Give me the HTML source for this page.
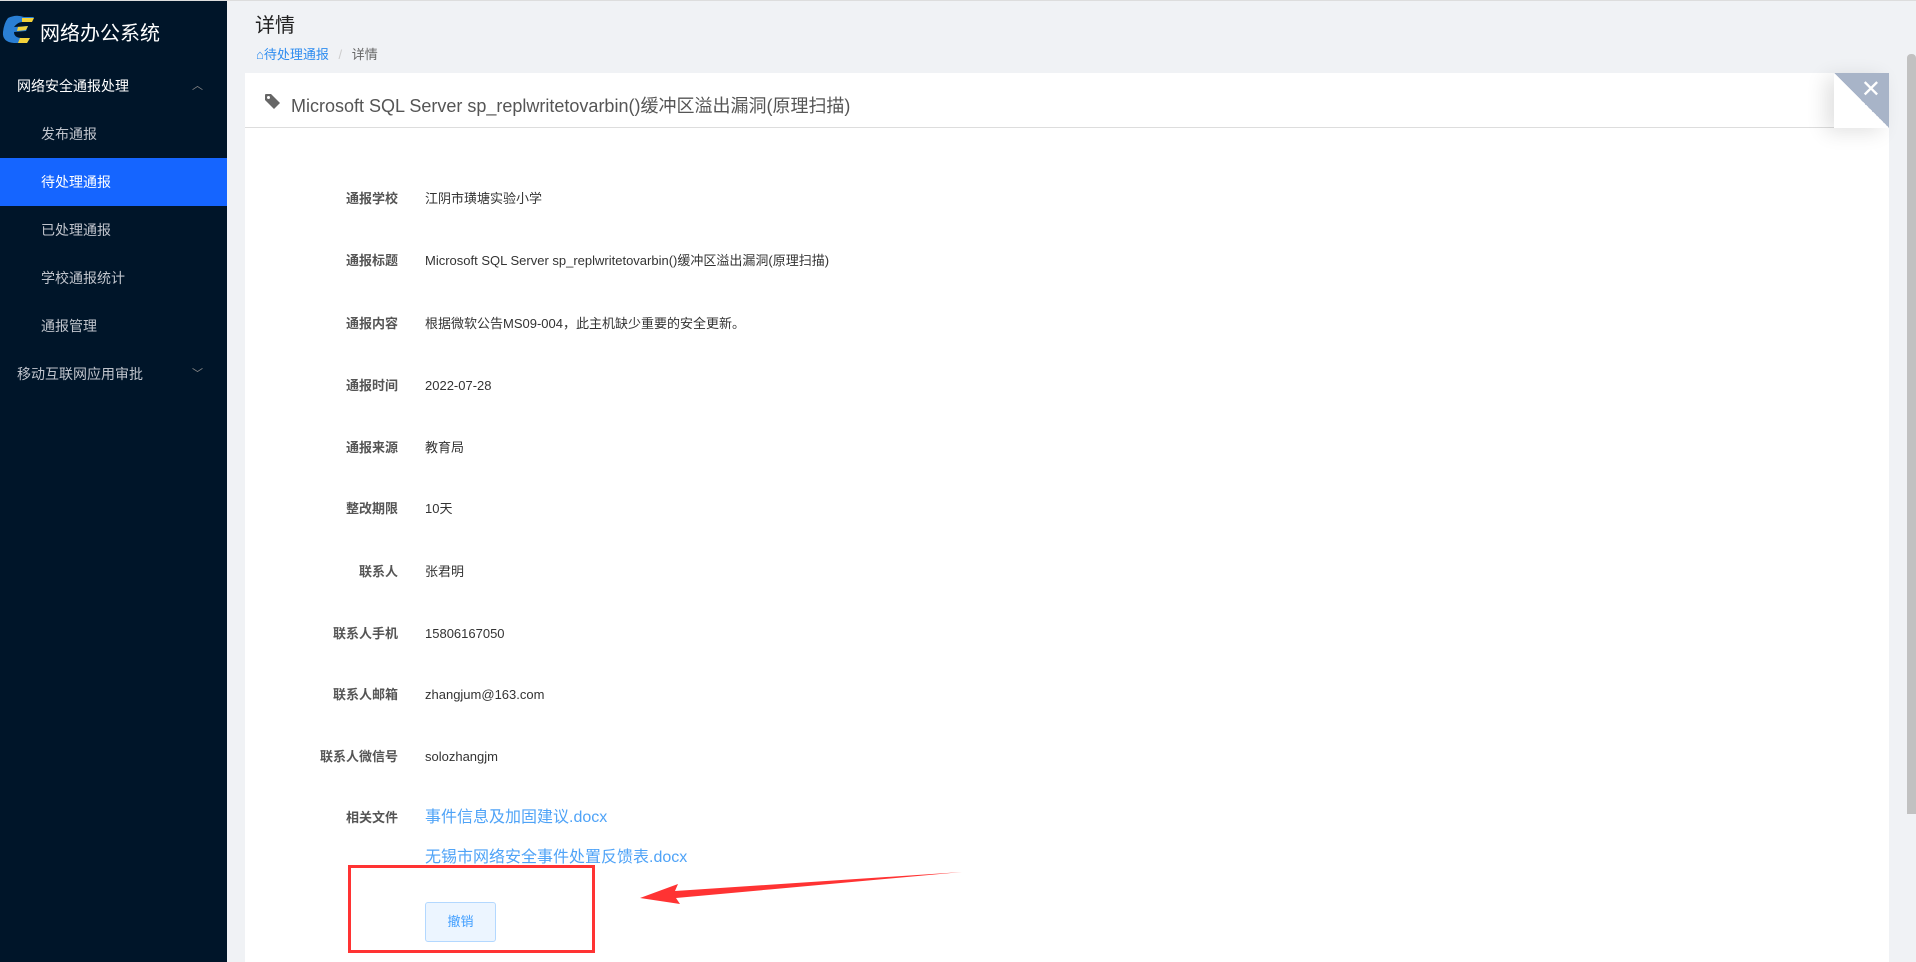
<!DOCTYPE html>
<html style="overflow:hidden;height:962px"><head><meta charset="utf-8"><style>
*{margin:0;padding:0;box-sizing:border-box}
body{width:1916px;height:962px;overflow:hidden;background:#f0f2f5;font-family:"Liberation Sans","Noto Sans CJK SC",sans-serif;position:relative}
.side{position:absolute;left:0;top:0;width:227px;height:962px;background:#001529;border-top:1px solid #ddd}
.logo{position:absolute;left:40px;top:16px;color:#fff;font-size:20px}
.mi{position:absolute;left:0;width:227px;height:48px;line-height:48px;color:#c0c4cc;font-size:14px}
.mi.sub{padding-left:41px}
.mi.grp{padding-left:17px;color:#fff}
.mi.act{background:#1565ff;color:#fff}
.chev{position:absolute;right:24px;top:0;color:#888;font-size:11px}
.topline{position:absolute;left:227px;top:0;right:0;height:1px;background:#ddd}
.h1{position:absolute;left:255px;top:9px;font-size:20px;color:#222}
.bc{position:absolute;left:256px;top:44px;font-size:13px;color:#666}
.bc a{color:#2d8cf0}
.card{position:absolute;left:245px;top:73px;width:1644px;height:889px;background:#fff}
.ch{height:55px;border-bottom:1px solid #ddd;position:relative}
.ttl{position:absolute;left:46px;top:19px;font-size:18px;color:#555}
.close{position:absolute;right:0;top:0;width:55px;height:55px;background:linear-gradient(45deg,#fff 50%,#a8b4c8 50%);box-shadow:-8px 4px 20px rgba(0,0,0,.12)}
.close span{position:absolute;right:8px;top:2px;color:#fff;font-size:24px}
.row{position:absolute;left:0;width:1000px;font-size:13px;height:20px;line-height:20px}
.lab{position:absolute;right:calc(1000px - 398px);color:#555;font-weight:bold;white-space:nowrap}
.val{position:absolute;left:425px;color:#333;white-space:nowrap}
.file{color:#4fa3f7;font-size:16px}
.btn{position:absolute;left:425px;top:902px;width:71px;height:40px;border:1px solid #b3d8ff;background:#ecf5ff;color:#409eff;font-size:13px;text-align:center;line-height:38px;border-radius:3px}
.red{position:absolute;left:348px;top:865px;width:247px;height:88px;border:3px solid #f33}
.sb{position:absolute;left:1907px;top:54px;width:9px;height:760px;background:#c1c1c1;border-radius:4px 4px 0 0}
</style></head><body>
<div class="side">
<svg style="position:absolute;left:0;top:13px" width="36" height="32" viewBox="0 0 36 32"><path d="M8 4 Q16 0 24 3 L34 3 L31 8 L22 8 Q18 8 14 13 L28 12 L26 17 L14 18 Q14 24 22 24 L30 24 L27 29 L14 29 Q2 28 3 18 Q4 9 8 4Z" fill="#2a7fd4"/><path d="M22 4 L34 4 L32 8 L22 8Z M18 13 L28 12 L26 16 L17 17Z M20 24 L30 24 L27 29 L18 29Z" fill="#f4d23a"/></svg>
<div class="logo">网络办公系统</div>
<div class="mi grp" style="top:61px">网络安全通报处理<span class="chev">︿</span></div>
<div class="mi sub" style="top:109px">发布通报</div>
<div class="mi sub act" style="top:157px">待处理通报</div>
<div class="mi sub" style="top:205px">已处理通报</div>
<div class="mi sub" style="top:253px">学校通报统计</div>
<div class="mi sub" style="top:301px">通报管理</div>
<div class="mi grp" style="top:349px;color:#c0c4cc">移动互联网应用审批<span class="chev">﹀</span></div>
</div>
<div class="topline"></div>
<div class="h1">详情</div>
<div class="bc"><a>&#8962;待处理通报</a> <span style="color:#ccc;margin:0 6px">/</span> 详情</div>
<div class="card">
<div class="ch">
<svg style="position:absolute;left:20px;top:21px" width="15" height="15" viewBox="0 0 15 15"><path d="M0 1 Q0 0 1 0 L6 0 L15 9 L9 15 L0 6Z" fill="#666"/><circle cx="3.5" cy="3.5" r="1.5" fill="#fff"/></svg>
<div class="ttl">Microsoft SQL Server sp_replwritetovarbin()缓冲区溢出漏洞(原理扫描)</div>
<div class="close"><span>✕</span></div>
</div>
</div>
<div class="row" style="top:189px"><span class="lab">通报学校</span><span class="val">江阴市璜塘实验小学</span></div>
<div class="row" style="top:251px"><span class="lab">通报标题</span><span class="val">Microsoft SQL Server sp_replwritetovarbin()缓冲区溢出漏洞(原理扫描)</span></div>
<div class="row" style="top:314px"><span class="lab">通报内容</span><span class="val">根据微软公告MS09-004，此主机缺少重要的安全更新。</span></div>
<div class="row" style="top:376px"><span class="lab">通报时间</span><span class="val">2022-07-28</span></div>
<div class="row" style="top:438px"><span class="lab">通报来源</span><span class="val">教育局</span></div>
<div class="row" style="top:499px"><span class="lab">整改期限</span><span class="val">10天</span></div>
<div class="row" style="top:562px"><span class="lab">联系人</span><span class="val">张君明</span></div>
<div class="row" style="top:624px"><span class="lab">联系人手机</span><span class="val">15806167050</span></div>
<div class="row" style="top:685px"><span class="lab">联系人邮箱</span><span class="val">zhangjum@163.com</span></div>
<div class="row" style="top:747px"><span class="lab">联系人微信号</span><span class="val">solozhangjm</span></div>
<div class="row" style="top:808px"><span class="lab">相关文件</span><span class="val file">事件信息及加固建议.docx</span></div>
<div class="row" style="top:848px"><span class="val file">无锡市网络安全事件处置反馈表.docx</span></div>
<div class="btn">撤销</div>
<div class="red"></div>
<svg style="position:absolute;left:640px;top:860px" width="340" height="50"><polygon points="322,12 35,31 38,24 0,38 40,44 36,38" fill="#f33"/></svg>
<div class="sb"></div>
</body></html>
